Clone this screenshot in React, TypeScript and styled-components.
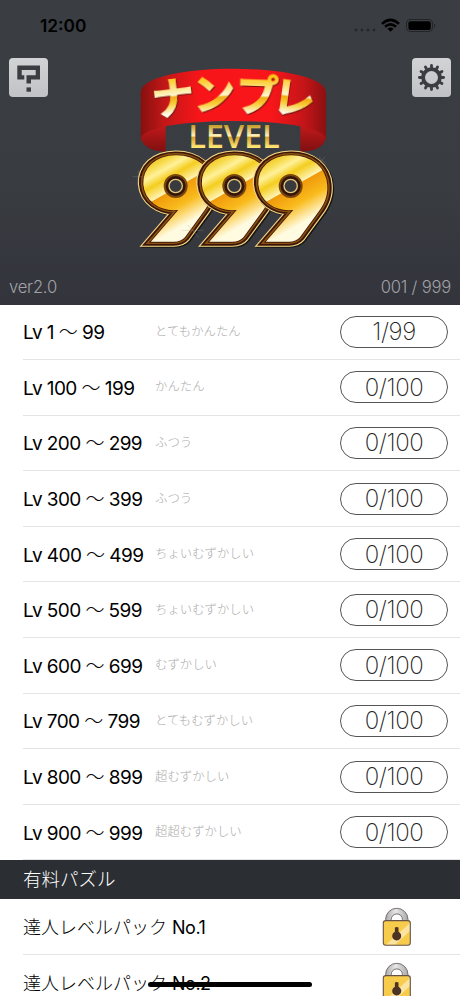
import styled, { createGlobalStyle } from "styled-components";

const levels = [
  { from: "Lv 1", to: "99", label: "とてもかんたん", progress: "1/99" },
  { from: "Lv 100", to: "199", label: "かんたん", progress: "0/100" },
  { from: "Lv 200", to: "299", label: "ふつう", progress: "0/100" },
  { from: "Lv 300", to: "399", label: "ふつう", progress: "0/100" },
  { from: "Lv 400", to: "499", label: "ちょいむずかしい", progress: "0/100" },
  { from: "Lv 500", to: "599", label: "ちょいむずかしい", progress: "0/100" },
  { from: "Lv 600", to: "699", label: "むずかしい", progress: "0/100" },
  { from: "Lv 700", to: "799", label: "とてもむずかしい", progress: "0/100" },
  { from: "Lv 800", to: "899", label: "超むずかしい", progress: "0/100" },
  { from: "Lv 900", to: "999", label: "超超むずかしい", progress: "0/100" },
];

const packs = ["No.1", "No.2"];

const kana = [
  { char: "ナ", x: 80, y: 176, turn: -7 },
  { char: "ン", x: 204, y: 166, turn: -3 },
  { char: "プ", x: 332, y: 168, turn: 2 },
  { char: "レ", x: 443, y: 176, turn: 8 },
];

const StatusIcons = () => (
  <svg width="84" height="18" viewBox="0 0 84 18">
    <g fill="#25272b">
      <circle cx="3" cy="14" r="1.4" />
      <circle cx="9" cy="14" r="1.4" />
      <circle cx="15" cy="14" r="1.4" />
      <circle cx="21" cy="14" r="1.4" />
    </g>
    <g fill="none" stroke="#000" strokeWidth="2.5">
      <path d="M29 7.8 Q37.5 0 46 7.8" />
      <path d="M32 10.8 Q37.5 6 43 10.8" />
    </g>
    <path d="M34.4 12.8 Q37.5 10.4 40.6 12.8 L37.5 15.8Z" />
    <rect x="53.5" y="3.5" width="26" height="12" rx="3.6" fill="none" stroke="#222428" />
    <rect x="55.4" y="5.2" width="22.4" height="8.8" rx="2" />
    <path d="M81 7.5 Q83.5 9.5 81 11.7Z" fill="#222428" />
  </svg>
);

const HelpIcon = () => (
  <svg width="39" height="39" viewBox="0 0 39 39">
    <path
      d="M8.3 7.5 H31 V21.6 H22 V25.6 H17.5 V17.3 H26.7 V12 H12.7 V17.3 H15.3 V21.6 H8.3Z"
      fill="#3a3d41"
    />
    <rect x="17.5" y="29.4" width="4.5" height="4.3" fill="#3a3d41" />
  </svg>
);

const GearIcon = () => (
  <svg width="39" height="39" viewBox="0 0 39 39">
    <g stroke="#3a3d41" fill="none">
      <circle cx="19.5" cy="19.5" r="8.4" strokeWidth="3.8" />
      {Array.from({ length: 12 }, (_, i) => (
        <path
          key={i}
          d="M19.5 10 V7.4"
          strokeWidth="2.8"
          strokeLinecap="round"
          transform={`rotate(${i * 30} 19.5 19.5)`}
        />
      ))}
    </g>
  </svg>
);

const LockIcon = () => (
  <svg width="30" height="40" viewBox="0 0 30 40">
    <defs>
      <linearGradient id="lockShackle" x1="0" y1="0" x2="1" y2="0">
        <stop offset="0" stopColor="#aaa" />
        <stop offset="0.45" stopColor="#e8e8e8" />
        <stop offset="1" stopColor="#a9a9a9" />
      </linearGradient>
    </defs>
    <path
      d="M3.6 15 V12.5 A11.2 11.2 0 0 1 26 12.5 V15 H20.4 V12.5 A5.6 5.6 0 0 0 9.2 12.5 V15Z"
      fill="url(#lockShackle)"
      stroke="#77706f"
    />
    <rect x="1.3" y="13.6" width="27" height="24.6" rx="2.5" fill="#f7cc4d" />
    <path d="M28 16 V24 L13 37.8 H4Z" fill="#fbe3a0" />
    <rect x="1.3" y="13.6" width="27" height="24.6" rx="2.5" fill="none" stroke="#665247" strokeWidth="1.1" />
    <path
      d="M12.9 20.5 Q14.7 19.3 16.5 20.5 V24.8 A4.5 4.5 0 1 1 12.9 24.8Z"
      fill="#4b3424"
    />
  </svg>
);

const GoldNine = ({ x }: { x: number }) => (
  <g transform={`translate(${x} 552)`}>
    <g transform="translate(10 0) skewX(4) scale(1.14 1)" strokeMiterlimit="3">
      <use href="#nine" stroke="#171511" strokeWidth="46" x="3" y="4" />
      <use href="#nine" stroke="#f2d683" strokeWidth="46" />
      <use href="#nine" stroke="#3b1508" strokeWidth="40" />
      <use href="#nine" stroke="#8a500f" strokeWidth="30" />
      <use href="#nine" stroke="#42190a" strokeWidth="22" />
      <use href="#nine" stroke="url(#nineFace)" strokeWidth="17" fill="url(#nineFace)" />
      <ellipse cx="88" cy="-159" rx="44" ry="50" fill="url(#nineFace)" />
    </g>
    <circle cx="100" cy="-159" r="33" fill="#32150c" stroke="#7a460c" strokeWidth="6" />
    <circle cx="100" cy="-159" r="20" fill="#393a3d" stroke="#e5c67a" strokeWidth="4" />
  </g>
);

const Logo = () => (
  <svg width="215" height="205" viewBox="0 0 645 615">
    <defs>
      <linearGradient id="ribbon" x1="47" x2="603" y1="0" y2="0" gradientUnits="userSpaceOnUse">
        <stop offset="0" stopColor="#86100f" />
        <stop offset="0.12" stopColor="#bf1717" />
        <stop offset="0.32" stopColor="#f81519" />
        <stop offset="0.7" stopColor="#f8161a" />
        <stop offset="0.88" stopColor="#c51518" />
        <stop offset="1" stopColor="#8b1011" />
      </linearGradient>
      <linearGradient id="ribbonBack" x1="0" x2="0" y1="0" y2="1">
        <stop offset="0" stopColor="#c7191b" />
        <stop offset="1" stopColor="#7e1011" />
      </linearGradient>
      <linearGradient id="kanaGold" x1="0" x2="0" y1="68" y2="188" gradientUnits="userSpaceOnUse">
        <stop offset="0" stopColor="#ffc416" />
        <stop offset="0.46" stopColor="#fff8d2" />
        <stop offset="0.48" stopColor="#f0aa13" />
        <stop offset="0.65" stopColor="#f8cd38" />
        <stop offset="0.9" stopColor="#fffbe5" />
      </linearGradient>
      <linearGradient id="levelGold" x1="0" x2="0" y1="208" y2="278" gradientUnits="userSpaceOnUse">
        <stop offset="0" stopColor="#c59518" />
        <stop offset="0.5" stopColor="#fff4be" />
        <stop offset="0.55" stopColor="#d4a229" />
        <stop offset="1" stopColor="#ffe778" />
      </linearGradient>
      <linearGradient id="nineFace" x1="20" y1="-240" x2="150" y2="-30" gradientUnits="userSpaceOnUse">
        <stop offset="0" stopColor="#efbd08" />
        <stop offset="0.12" stopColor="#f7dc50" />
        <stop offset="0.2" stopColor="#fff19a" />
        <stop offset="0.3" stopColor="#f4cd1e" />
        <stop offset="0.44" stopColor="#fff3b4" />
        <stop offset="0.45" stopColor="#f09a0c" />
        <stop offset="0.64" stopColor="#f9bb1c" />
        <stop offset="0.86" stopColor="#fffbe0" />
      </linearGradient>
      <NineText id="nine">9</NineText>
    </defs>

    <path d="M47 250 C57 218 90 210 122 206 V290 Q60 290 47 250Z" fill="url(#ribbonBack)" />
    <path d="M603 250 C593 218 558 210 526 206 V290 Q592 290 603 250Z" fill="url(#ribbonBack)" />
    <path
      d="M47 112 C52 18 598 18 603 112 V253 C599 180 50 180 47 253Z"
      fill="url(#ribbon)"
    />

    {kana.map(({ char, x, y, turn }) => (
      <g key={char} transform={`rotate(${turn} ${x + 60} 130)`}>
        <KanaText x={x} y={y}>{char}</KanaText>
      </g>
    ))}
    <LevelText x="190" y="278" textLength="274">LEVEL</LevelText>

    <GoldNine x={52} />
    <GoldNine x={228} />
    <GoldNine x={397} />

    <g stroke="#9b9994" strokeWidth="1.5" opacity="0.5">
      <path d="M22 365 H58 M40 347 V381 M172 526 H236 M188 510 L222 548" />
      <path d="M582 326 L600 306 M582 307 L602 325" />
    </g>
  </svg>
);

const App = () => {
  return (
    <>
      <GlobalStyle />
      <Screen>
        <Header>
          <StatusBar>
            <Clock>12:00</Clock>
            <StatusIcons />
          </StatusBar>
          <Masthead>
            <IconButton aria-label="help">
              <HelpIcon />
            </IconButton>
            <Logo />
            <IconButton aria-label="settings">
              <GearIcon />
            </IconButton>
          </Masthead>
          <HeaderFooter>
            <span>ver2.0</span>
            <span>001 / 999</span>
          </HeaderFooter>
        </Header>
        <div>
          {levels.map((level) => (
            <Row key={level.from}>
              <Range>
                {level.from} <Tilde>〜</Tilde> {level.to}
              </Range>
              <Difficulty>{level.label}</Difficulty>
              <Progress>{level.progress}</Progress>
            </Row>
          ))}
        </div>
        <SectionTitle>有料パズル</SectionTitle>
        <div>
          {packs.map((pack) => (
            <Row key={pack}>
              <PackName>
                達人レベルパック <PackNumber>{pack}</PackNumber>
              </PackName>
              <LockSlot>
                <LockIcon />
              </LockSlot>
            </Row>
          ))}
        </div>
        <HomeIndicator />
      </Screen>
    </>
  );
};

export default App;

const GlobalStyle = createGlobalStyle`
  * {
    box-sizing: border-box;
  }
  body {
    margin: 0;
    background: white;
    font-family: Inter, "Noto Sans CJK JP", sans-serif;
  }
  svg {
    display: block;
    flex-shrink: 0;
  }
`;

const Screen = styled.main`
  position: relative;
  width: 460px;
  height: 996px;
  overflow: hidden;
  background: white;
`;

const Header = styled.header`
  height: 304.5px;
  display: flex;
  flex-direction: column;
  background: linear-gradient(#3a3d42, #393c41 60%, #33343c);
`;

const StatusBar = styled.div`
  height: 55px;
  padding: 16px 23px 0 40px;
  display: flex;
  justify-content: space-between;
  align-items: flex-start;
`;

const Clock = styled.span`
  font-size: 17.3px;
  line-height: 20px;
  font-weight: 600;
  color: black;
`;

const Masthead = styled.div`
  height: 215px;
  padding: 0 9px;
  display: grid;
  grid-template-columns: 39px 215px 39px;
  column-gap: 77px;
  justify-content: start;
  align-items: start;

  & > :last-child {
    margin-left: -5px;
  }
`;

const IconButton = styled.button`
  width: 39px;
  height: 39px;
  margin: 3px 0 0;
  padding: 0;
  border: 0;
  border-radius: 4px;
  background: linear-gradient(#d2d3d5, #c1c2c5);
`;

const HeaderFooter = styled.div`
  padding: 6px 9px 0;
  display: flex;
  justify-content: space-between;
  font-size: 16.6px;
  line-height: 22px;
  font-weight: 300;
  letter-spacing: -0.2px;
  color: #a1a2a6;
`;

const Row = styled.div`
  height: 55.6px;
  margin-left: 23px;
  padding-right: 12px;
  display: flex;
  align-items: center;
  border-bottom: 1px solid #e4e4e6;
`;

const Range = styled.span`
  width: 132px;
  padding-top: 3px;
  font-size: 19px;
  line-height: 28px;
  letter-spacing: -0.57px;
  white-space: nowrap;
  color: black;
`;

const Tilde = styled.span`
  font-weight: 300;
`;

const Difficulty = styled.span`
  flex: 1;
  font-size: 12.4px;
  line-height: 18px;
  font-weight: 300;
  color: #aaa;
`;

const Progress = styled.span`
  width: 108px;
  height: 32px;
  display: flex;
  align-items: center;
  justify-content: center;
  border: 1.4px solid #555;
  border-radius: 16px;
  font-size: 24px;
  font-weight: 200;
  letter-spacing: -0.4px;
  color: #222;
`;

const SectionTitle = styled.h2`
  height: 39px;
  margin: 0;
  padding: 0 23px;
  font-size: 18.5px;
  line-height: 38px;
  font-weight: 300;
  color: white;
  background: #2b2e32;
`;

const PackName = styled.span`
  flex: 1;
  padding-top: 3px;
  font-size: 18px;
  line-height: 28px;
  font-weight: 300;
  color: black;
`;

const PackNumber = styled.span`
  font-weight: 400;
  letter-spacing: -0.5px;
`;

const LockSlot = styled.span`
  width: 108px;
  padding-left: 42px;
`;

const HomeIndicator = styled.div`
  position: absolute;
  left: 148px;
  bottom: 9.5px;
  width: 164px;
  height: 5px;
  border-radius: 3px;
  background: black;
`;

const NineText = styled.text`
  font-family: Lato, sans-serif;
  font-size: 331px;
  font-weight: 900;
`;

const KanaText = styled.text`
  font-family: "Noto Sans CJK JP", sans-serif;
  font-size: 128px;
  font-weight: 700;
  fill: url(#kanaGold);
  stroke: url(#kanaGold);
  stroke-width: 3px;
  filter: drop-shadow(2px 3px 1px #71100c);
`;

const LevelText = styled.text`
  font-family: "Open Sans", sans-serif;
  font-size: 98px;
  font-weight: 600;
  fill: url(#levelGold);
`;
